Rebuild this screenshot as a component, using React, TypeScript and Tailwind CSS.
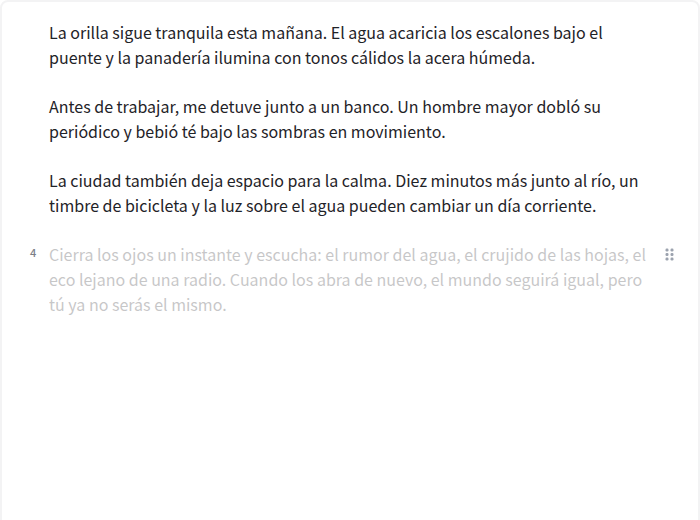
const paras = [
  "La orilla sigue tranquila esta mañana. El agua acaricia los escalones bajo el puente y la panadería ilumina con tonos cálidos la acera húmeda.",
  "Antes de trabajar, me detuve junto a un banco. Un hombre mayor dobló su periódico y bebió té bajo las sombras en movimiento.",
  "La ciudad también deja espacio para la calma. Diez minutos más junto al río, un timbre de bicicleta y la luz sobre el agua pueden cambiar un día corriente.",
];

export default function App() {
  return (
    <div className="h-[520px] w-[700px] overflow-hidden bg-white font-['Noto_Sans_CJK_JP',sans-serif] antialiased">
      <div className="h-[530px] rounded-t-lg border-2 border-[#f3f3f4] pt-[18px]">
        {paras.map((p) => (
          <p key={p} className="mb-[24px] w-[645px] pl-[47px] text-[16px] leading-[25px] text-[#1f2328]">
            {p}
          </p>
        ))}
        <div className="relative">
          <span className="absolute left-[28px] top-[3px] text-[11px] font-medium leading-[14px] text-[#7b8088]">4</span>
          <p className="w-[645px] pl-[47px] text-[16px] leading-[25px] text-[#1f2328] opacity-25">
            Cierra los ojos un instante y escucha: el rumor del agua, el crujido de las hojas, el eco lejano de una radio. Cuando los abra de nuevo, el mundo seguirá igual, pero tú ya no serás el mismo.
          </p>
          <svg className="absolute left-[663px] top-[5px]" width="10" height="14" viewBox="0 0 10 14" fill="#9ca3af">
            <rect x="0.5" y="1.5" width="3" height="3" rx="1.2" /><rect x="5.5" y="1.5" width="3" height="3" rx="1.2" />
            <rect x="0.5" y="6" width="3" height="3" rx="1.2" /><rect x="5.5" y="6" width="3" height="3" rx="1.2" />
            <rect x="0.5" y="10.5" width="3" height="3" rx="1.2" /><rect x="5.5" y="10.5" width="3" height="3" rx="1.2" />
          </svg>
        </div>
      </div>
    </div>
  );
}
